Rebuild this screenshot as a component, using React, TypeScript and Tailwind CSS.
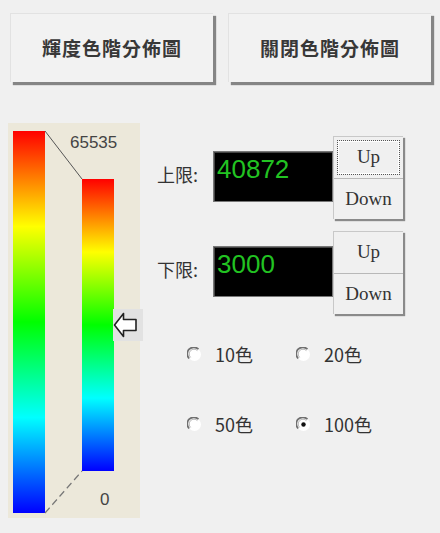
import React from "react";

const cjk = { fontFamily: '"Noto Sans CJK TC", "Noto Sans CJK SC", sans-serif' };
const serif = { fontFamily: '"Liberation Serif", "DejaVu Serif", serif' };
const sans = { fontFamily: '"Liberation Sans", Arial, sans-serif' };

function BigButton({ label }: { label: string }) {
  return (
    <button
      className="w-[203px] h-[69px] bg-[#f2f2f2] border-l border-t border-[#e2e2e2] shadow-[3px_3px_1px_#858585] flex items-center justify-center text-[19px] font-bold text-[#383838] tracking-[1px]"
      style={cjk}
    >
      {label}
    </button>
  );
}

function UpDown({ focused }: { focused?: boolean }) {
  return (
    <div className="w-[70px] h-[83px] flex flex-col border-l border-t border-[#c8c8c8] shadow-[2px_2px_1px_#8a8a8a] bg-[#f0f0f0]">
      <div className="h-[42px] p-[3px] border-b border-[#b8b8b8] flex">
        <div
          className={
            "flex-1 flex items-center justify-center text-[19px] text-[#333] " +
            (focused ? "border border-dotted border-[#555] shadow-[inset_0_0_0_1px_#fff]" : "")
          }
          style={serif}
        >
          Up
        </div>
      </div>
      <div className="flex-1 flex items-center justify-center text-[19px] text-[#333]" style={serif}>
        Down
      </div>
    </div>
  );
}

function Radio({ label, checked }: { label: string; checked?: boolean }) {
  return (
    <div className="flex items-center h-[24px]">
      <svg width="15" height="15" viewBox="0 0 15 15" className="mr-[13px]">
        <circle cx="7.5" cy="7.5" r="6.5" fill="#fff" />
        <path d="M2.2 11.5 A6 6 0 0 1 11.5 2.2" fill="none" stroke="#6f6f6f" strokeWidth="1.7" />
        <path d="M3.6 10.4 A4.5 4.5 0 0 1 10.4 3.6" fill="none" stroke="#b5b5b5" strokeWidth="1" />
        {checked && <circle cx="7.5" cy="7.5" r="2.2" fill="#111" />}
      </svg>
      <span className="text-[18px] text-[#333]" style={cjk}>
        {label}
      </span>
    </div>
  );
}

function ValueRow({ label, value, focused }: { label: string; value: string; focused?: boolean }) {
  return (
    <div className="flex items-start">
      <div className="w-[56px] h-[83px] flex items-center pb-[6px] text-[18px] text-[#333]" style={cjk}>
        {label}
      </div>
      <div className="mt-[15px] w-[120px] h-[51px] bg-black border border-[#777] shadow-[inset_1px_1px_0_#444] px-[3px] pt-[3px]">
        <span className="text-[26px] leading-[28px] text-[#22c322]" style={sans}>
          {value}
        </span>
      </div>
      <UpDown focused={focused} />
    </div>
  );
}

export default function App() {
  const grad = "linear-gradient(to bottom, #ff0000 0%, #ffff00 25%, #00ff00 50%, #00ffff 75%, #0000ff 100%)";
  return (
    <div className="w-[440px] h-[533px] bg-[#f0f0f0] overflow-hidden">
      <div className="flex gap-[15px] pt-[13px] pl-[10px]">
        <BigButton label="輝度色階分佈圖" />
        <BigButton label="關閉色階分佈圖" />
      </div>

      <div className="flex mt-[41px]">
        {/* color bar panel */}
        <div className="relative ml-[8px] w-[132px] h-[395px] bg-[#ece8da] flex items-start">
          <div className="ml-[5px] mt-[8px] w-[32px] h-[382px]" style={{ background: grad }} />
          <div className="ml-[37px] mt-[56px] w-[32px] h-[292px]" style={{ background: grad }} />
          <svg className="absolute left-0 top-0" width="132" height="395">
            <line x1="37" y1="8" x2="74" y2="56" stroke="#555" strokeWidth="1" />
            <line x1="37" y1="390" x2="74" y2="348" stroke="#777" strokeWidth="1.2" strokeDasharray="7 4" />
          </svg>
          <span className="absolute left-[62px] top-[7px] text-[17px] text-[#444]" style={sans}>
            65535
          </span>
          <span className="absolute left-[92px] top-[364px] text-[17px] text-[#444]" style={sans}>
            0
          </span>
          <div className="absolute left-[105px] top-[186px] w-[30px] h-[32px] bg-[#e2e2e2] flex items-center">
            <svg width="25" height="28" viewBox="0 0 25 28">
              <path
                d="M1.5 14 L10.5 2.5 L10.5 8.5 L23 8.5 L23 19.5 L10.5 19.5 L10.5 25.5 Z"
                fill="#fff"
                stroke="#222"
                strokeWidth="1.6"
                strokeLinejoin="round"
              />
            </svg>
          </div>
        </div>

        {/* controls */}
        <div className="ml-[17px] mt-[13px] flex flex-col">
          <ValueRow label="上限:" value="40872" focused />
          <div className="mt-[12px]">
            <ValueRow label="下限:" value="3000" />
          </div>
          <div className="mt-[28px] ml-[30px] grid grid-cols-[109px_109px] gap-y-[46px]">
            <Radio label="10色" />
            <Radio label="20色" />
            <Radio label="50色" />
            <Radio label="100色" checked />
          </div>
        </div>
      </div>
    </div>
  );
}
